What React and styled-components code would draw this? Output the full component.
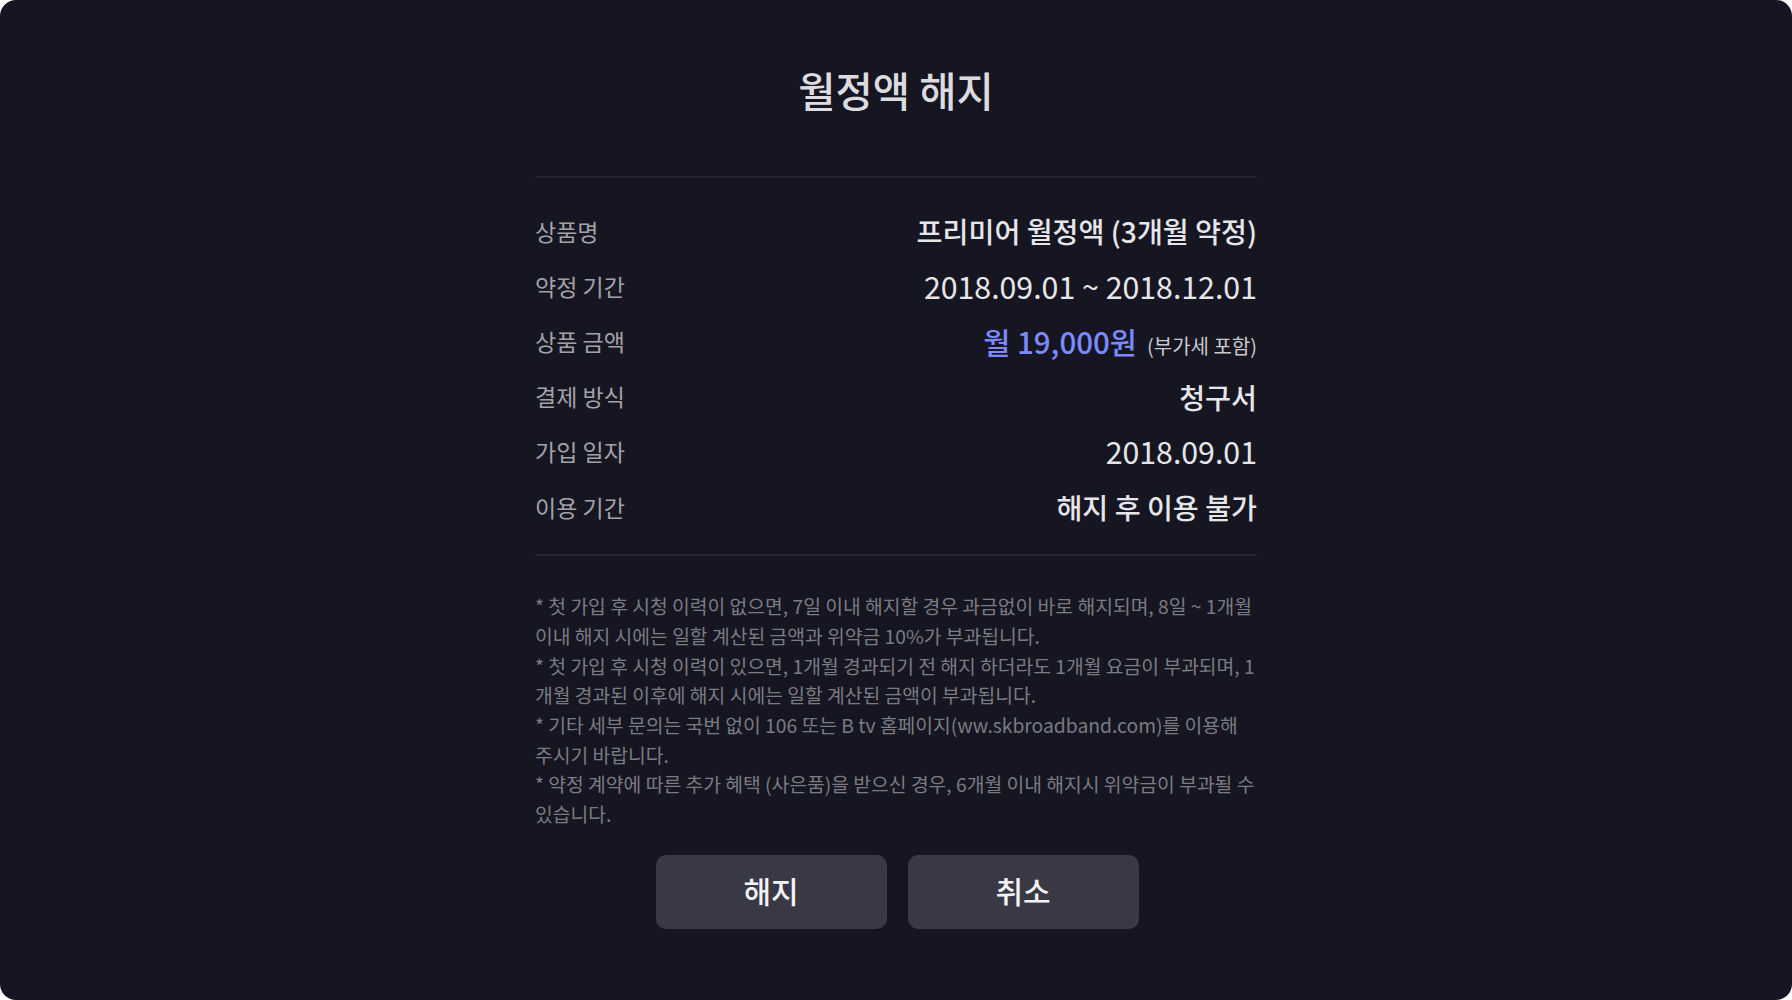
import React from "react";
import styled, { createGlobalStyle } from "styled-components";

const Global = createGlobalStyle`
  html, body { margin: 0; padding: 0; background: #ffffff; }
  body { font-family: "Noto Sans CJK KR", "Noto Sans", sans-serif; }
  * { box-sizing: border-box; }
`;

const Screen = styled.div`
  width: 1792px;
  height: 1000px;
  background: #161622;
  border-radius: 16px;
  overflow: hidden;
`;

const Column = styled.div`
  width: 722px;
  margin: 0 auto;
  padding-top: 65px;
  display: flex;
  flex-direction: column;
`;

const Title = styled.h1`
  margin: 0;
  height: 50px;
  line-height: 50px;
  text-align: center;
  font-size: 40.5px;
  font-weight: 500;
  color: #dcdce0;
`;

const Divider = styled.div`
  height: 2px;
  background: #262633;
  margin-top: ${(p) => p.$top || 0}px;
`;

const InfoList = styled.dl`
  margin: 0;
  padding: 25px 0 20px;
  display: flex;
  flex-direction: column;
`;

const Row = styled.div`
  height: 55.2px;
  display: flex;
  align-items: center;
  justify-content: space-between;
`;

const Label = styled.dt`
  font-size: 23px;
  color: #a2a2aa;
`;

const Value = styled.dd`
  margin: 0;
  display: flex;
  align-items: baseline;
  gap: 10px;
  color: #e6e6ea;
  font-size: ${(p) => (p.$num ? 30.3 : 28.2)}px;
  font-weight: ${(p) => (p.$num ? 400 : 500)};
`;

const Price = styled.span`
  color: #7b8bff;
  font-size: 29.5px;
  font-weight: 500;
`;

const Vat = styled.span`
  color: #c9c9ce;
  font-size: 20px;
  font-weight: 400;
`;

const Notes = styled.div`
  padding-top: 36px;
  display: flex;
  flex-direction: column;
`;

const Note = styled.p`
  margin: 0;
  font-size: 19.3px;
  line-height: 29.7px;
  color: #7b7b84;
`;

const Buttons = styled.div`
  margin-top: 25px;
  display: flex;
  justify-content: center;
  gap: 21px;
  padding-left: 2px;
`;

const Button = styled.button`
  width: 231px;
  height: 74px;
  padding: 0 0 3px;
  border: none;
  border-radius: 10px;
  background: #393945;
  color: #f2f2f4;
  font-family: "Noto Sans CJK KR", "Noto Sans", sans-serif;
  font-size: 30px;
  font-weight: 500;
  cursor: pointer;
`;

const rows = [
  { label: "상품명", value: "프리미어 월정액 (3개월 약정)" },
  { label: "약정 기간", value: "2018.09.01 ~ 2018.12.01", num: true },
  { label: "상품 금액", price: true },
  { label: "결제 방식", value: "청구서" },
  { label: "가입 일자", value: "2018.09.01", num: true },
  { label: "이용 기간", value: "해지 후 이용 불가" },
];

const notes = [
  "* 첫 가입 후 시청 이력이 없으면, 7일 이내 해지할 경우 과금없이 바로 해지되며, 8일 ~ 1개월 이내 해지 시에는 일할 계산된 금액과 위약금 10%가 부과됩니다.",
  "* 첫 가입 후 시청 이력이 있으면, 1개월 경과되기 전 해지 하더라도 1개월 요금이 부과되며, 1개월 경과된 이후에 해지 시에는 일할 계산된 금액이 부과됩니다.",
  "* 기타 세부 문의는 국번 없이 106 또는 B tv 홈페이지(ww.skbroadband.com)를 이용해 주시기 바랍니다.",
  "* 약정 계약에 따른 추가 혜택 (사은품)을 받으신 경우, 6개월 이내 해지시 위약금이 부과될 수 있습니다.",
];

export default function App() {
  return (
    <>
      <Global />
      <Screen>
        <Column>
          <Title>월정액 해지</Title>
          <Divider $top={61} />
          <InfoList>
            {rows.map((r) => (
              <Row key={r.label}>
                <Label>{r.label}</Label>
                {r.price ? (
                  <Value>
                    <Price>월 19,000원</Price>
                    <Vat>(부가세 포함)</Vat>
                  </Value>
                ) : (
                  <Value $num={r.num}>{r.value}</Value>
                )}
              </Row>
            ))}
          </InfoList>
          <Divider />
          <Notes>
            {notes.map((n) => (
              <Note key={n}>{n}</Note>
            ))}
          </Notes>
          <Buttons>
            <Button>해지</Button>
            <Button>취소</Button>
          </Buttons>
        </Column>
      </Screen>
    </>
  );
}
